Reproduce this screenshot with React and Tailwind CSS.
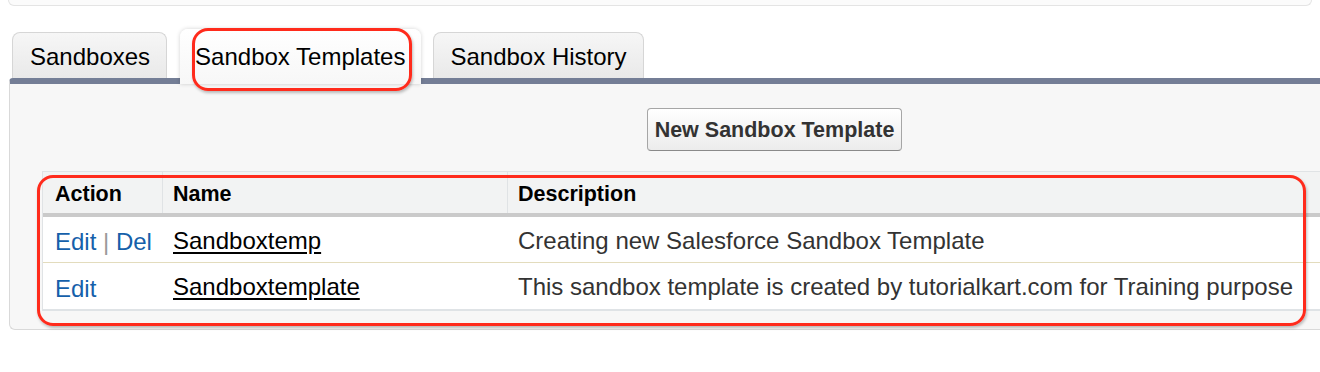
import React from "react";

const tabBase =
  "h-[46px] px-[16px] flex items-center rounded-t-[8px] border border-b-0 border-[#d6d6d6] bg-gradient-to-b from-[#f6f6f6] to-[#e9e9e9] text-black text-[24px] leading-none pt-[2px]";

export default function App() {
  return (
    <div className="relative w-[1320px] h-[372px] overflow-hidden bg-white font-['Liberation_Sans',Arial,sans-serif]">
      {/* top box remnant */}
      <div className="h-[6px] ml-[8px] mr-[8px] border-l border-r border-b border-[#e4e4e4] rounded-b-[6px] bg-[#fbfbfb]" />

      {/* tabs */}
      <div className="mt-[23px] flex items-end pl-[12px] gap-[14px]">
        <div className={tabBase + " pl-[17px]"}>Sandboxes</div>
        <div className="relative z-10 -mb-[6px] h-[55px] px-[15px] pr-[16px] flex items-start pt-[16px] rounded-t-[8px] bg-gradient-to-b from-white to-[#f7f7f7] text-black text-[24px] leading-none shadow-[0_0_4px_rgba(0,0,0,0.18)] -ml-[1px] -mr-[2px]">
          Sandbox Templates
        </div>
        <div className={tabBase}>Sandbox History</div>
      </div>

      {/* panel */}
      <div className="ml-[9px] border-t-[6px] border-t-[#747e96] border-l border-b border-l-[#d9d9d9] border-b-[#d9d9d9] rounded-tl-[4px] rounded-bl-[6px] bg-[#f7f7f7] h-[252px]">
        <div className="pt-[24px]">
          <button className="ml-[637px] h-[43px] w-[255px] pt-[3px] rounded-[4px] border border-[#a6a6a6] border-b-[#8a8a8a] bg-gradient-to-b from-white to-[#ececec] text-[#333] font-bold text-[21.5px] leading-none">
            New Sandbox Template
          </button>
        </div>

        {/* table */}
        <div className="mt-[20px] ml-[32px] border-t border-l border-[#e0e3e5] bg-white">
          <div className="flex h-[45px] bg-[#f2f3f3] border-b-[4px] border-[#cacaca] text-black font-bold text-[21.5px] leading-none">
            <div className="w-[120px] shrink-0 flex items-center pt-[4px] pl-[12px] border-r border-[#e0e3e5]">Action</div>
            <div className="w-[345px] shrink-0 flex items-center pt-[4px] pl-[10px] border-r border-[#e0e3e5]">Name</div>
            <div className="flex-1 flex items-center pt-[4px] pl-[10px]">Description</div>
          </div>
          <div className="flex h-[46px] items-center border-b border-[#e3dcbd] text-[24px] leading-none">
            <div className="w-[120px] shrink-0 pl-[12px] pt-[4px] text-[#1560aa]">
              Edit <span className="text-[#9a9a9a]">|</span> Del
            </div>
            <div className="w-[345px] shrink-0 pl-[10px] pt-[2px]">
              <span className="underline underline-offset-[3px] text-black">Sandboxtemp</span>
            </div>
            <div className="flex-1 pl-[10px] pt-[2px] text-[#333]">Creating new Salesforce Sandbox Template</div>
          </div>
          <div className="flex h-[48px] items-center border-b-[2px] border-[#dfe3e6] text-[24px] leading-none">
            <div className="w-[120px] shrink-0 pl-[12px] pt-[6px] text-[#1560aa]">Edit</div>
            <div className="w-[345px] shrink-0 pl-[10px] pt-[2px]">
              <span className="underline underline-offset-[3px] text-black">Sandboxtemplate</span>
            </div>
            <div className="flex-1 pl-[10px] pt-[2px] text-[#333] whitespace-nowrap">
              This sandbox template is created by tutorialkart.com for Training purpose
            </div>
          </div>
        </div>
      </div>

      {/* red annotations */}
      <div className="absolute left-[192px] top-[28px] w-[220px] h-[63px] rounded-[16px] border-[3px] border-[#ff2b1c] shadow-[1px_2px_3px_rgba(0,0,0,0.25)] pointer-events-none z-20" />
      <div className="absolute left-[37px] top-[175px] w-[1269px] h-[151px] rounded-[16px] border-[3px] border-[#ff2b1c] shadow-[1px_2px_3px_rgba(0,0,0,0.25)] pointer-events-none z-20" />
    </div>
  );
}
